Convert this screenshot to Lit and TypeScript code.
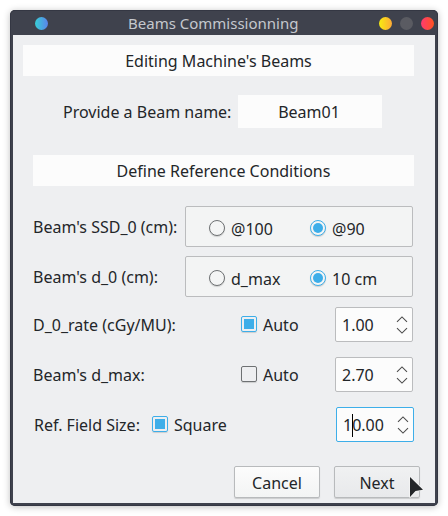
import { LitElement, html, css, svg } from "lit";
import { customElement, property } from "lit/decorators.js";
import { classMap } from "lit/directives/class-map.js";

const box = css`
  :host { display: block; }
  * { box-sizing: border-box; }
`;

@customElement("option-mark")
class OptionMark extends LitElement {
  @property() kind = "radio";
  @property({ type: Boolean }) checked = false;
  @property() label = "";
  static styles = [box, css`
    .option { display: flex; align-items: center; gap: 6px; height: 24px; white-space: nowrap; }
    .mark {
      width: 16px; height: 16px; flex: none; border: 1px solid #6e7173;
      border-radius: 2px; padding: 2px; box-shadow: 0 1px 1px rgba(0, 0, 0, 0.15);
    }
    .radio { border-radius: 50%; background: #f4f5f5; }
    .on { border-color: #3daee9; }
    .fill { width: 10px; height: 10px; background: #3daee9; }
    .radio .fill { border-radius: 50%; }
    .text { line-height: 22px; position: relative; top: 1px; }
  `];
  render() {
    return html`<div class="option">
      <div class=${classMap({ mark: true, radio: this.kind === "radio", on: this.checked })}>
        ${this.checked ? html`<div class="fill"></div>` : ""}
      </div>
      <span class="text">${this.label}</span>
    </div>`;
  }
}

@customElement("spin-box")
class SpinBox extends LitElement {
  @property() value = "";
  @property({ type: Boolean }) focused = false;
  static styles = [box, css`
    .spin {
      display: flex; align-items: center; justify-content: space-between;
      width: 78px; height: 35px; padding: 0 4px 0 6px; background: #fcfcfc;
      border: 1px solid #bbbcbe; border-radius: 2px;
    }
    .focused { border-color: #3daee9; }
    .value { position: relative; line-height: 22px; }
    .caret { position: absolute; left: 9px; top: 0; width: 1px; height: 23px; background: #000; }
    svg { display: block; fill: none; stroke: #4d4d4d; stroke-width: 1.1; }
  `];
  render() {
    return html`<div class=${classMap({ spin: true, focused: this.focused })}>
      <span class="value">${this.value}${this.focused ? html`<span class="caret"></span>` : ""}</span>
      <svg width="12" height="18" viewBox="0 0 12 18">
        ${svg`<path d="M1 5.8 6 .9 11 5.8M1 12.2 6 17.1 11 12.2" />`}
      </svg>
    </div>`;
  }
}

@customElement("app-root")
class AppRoot extends LitElement {
  static styles = [box, css`
    :host {
      height: 516px; padding: 10px; background: #fff; overflow: hidden; box-sizing: border-box;
      font: 16px/22px "Noto Sans", sans-serif; color: #232629;
    }
    .window {
      width: 428px; height: 496px; padding: 0 3px 3px; background: #3f424d;
      border-radius: 5px; box-shadow: inset 0 0 0 1px #343743, 0 1px 7px rgba(0, 0, 0, 0.25);
    }
    .titlebar { height: 25px; display: flex; align-items: center; padding: 2px 1px 0 22px; }
    .dot { width: 13px; height: 13px; border-radius: 50%; flex: none; }
    .pin { background: linear-gradient(90deg, #37cfd6, #5b83ea); }
    .min { background: linear-gradient(90deg, #f7ec10, #fda936); }
    .max { background: #5a5b62; }
    .close { background: linear-gradient(90deg, #ff3b70, #ff5320); }
    .title { flex: 1; padding: 0 0 1px 80px; font-size: 15px; line-height: 20px; color: #c5c8cd; white-space: nowrap; }
    .dots { display: flex; gap: 8px; }
    .content { height: 468px; background: #eeeff1; padding: 10px 0 0 20px; }
    .banner { width: 381px; height: 31px; background: #fcfcfc; text-align: center; line-height: 33px; }
    .wide { width: 391px; margin-left: -10px; }
    .name { display: flex; margin: 19px 0 27px 30px; height: 33px; line-height: 35px; white-space: nowrap; }
    .name-label { width: 175px; }
    .name-field { width: 144px; background: #fcfcfc; text-align: center; padding-right: 2px; }
    .group-row { display: grid; grid-template: 41px / 152px 228px; height: 41px; margin-bottom: 9px; white-space: nowrap; }
    .first { margin-top: 20px; }
    .row-label { line-height: 43px; }
    .group {
      display: grid; grid-template-columns: 101px 1fr; padding: 9px 0 0 23px;
      background: #f3f4f4; border: 1px solid #bbbcbe; border-radius: 2px;
    }
    .group option-mark { height: 24px; }
    .row { display: grid; grid-template: 35px / 208px 94px 78px; height: 35px; margin-bottom: 15px; white-space: nowrap; }
    .values { margin-top: 10px; }
    .row option-mark { padding-top: 5px; }
    .size { grid-template-columns: 119px 184px 78px; }
    .row .row-label { line-height: 37px; }
    .size .row-label { padding-left: 1px; }
    .buttons { display: flex; gap: 14px; margin: 24px 0 0 201px; position: relative; }
    .button {
      width: 86px; height: 32px; text-align: center; line-height: 32px; border: 1px solid #b8babc;
      border-radius: 2px; background: linear-gradient(#fcfcfc, #f3f4f4); box-shadow: 0 1px 1px rgba(0, 0, 0, 0.15);
    }
    .hover { background: linear-gradient(#f0f1f2, #e8e9eb); }
    .cursor { position: absolute; left: 174px; top: 9px; }
  `];
  render() {
    return html`<div class="window">
      <div class="titlebar">
        <div class="dot pin"></div>
        <div class="title">Beams Commissionning</div>
        <div class="dots"><div class="dot min"></div><div class="dot max"></div><div class="dot close"></div></div>
      </div>
      <div class="content">
        <div class="banner wide">Editing Machine's Beams</div>
        <div class="name"><div class="name-label">Provide a Beam name:</div><div class="name-field">Beam01</div></div>
        <div class="banner">Define Reference Conditions</div>
        <div class="group-row first">
          <div class="row-label">Beam's SSD_0 (cm):</div>
          <div class="group"><option-mark label="@100"></option-mark><option-mark label="@90" checked></option-mark></div>
        </div>
        <div class="group-row">
          <div class="row-label">Beam's d_0 (cm):</div>
          <div class="group"><option-mark label="d_max"></option-mark><option-mark label="10 cm" checked></option-mark></div>
        </div>
        <div class="row values">
          <div class="row-label">D_0_rate (cGy/MU):</div>
          <option-mark kind="check" label="Auto" checked></option-mark>
          <spin-box value="1.00"></spin-box>
        </div>
        <div class="row">
          <div class="row-label">Beam's d_max:</div>
          <option-mark kind="check" label="Auto"></option-mark>
          <spin-box value="2.70"></spin-box>
        </div>
        <div class="row size">
          <div class="row-label">Ref. Field Size:</div>
          <option-mark kind="check" label="Square" checked></option-mark>
          <spin-box value="10.00" focused></spin-box>
        </div>
        <div class="buttons">
          <div class="button">Cancel</div>
          <div class="button hover">Next</div>
          <svg class="cursor" width="20" height="26" viewBox="0 0 20 26">
            <path d="M2 2V22L7.5 16 15 14.7Z" fill="#232629" stroke="#f4f4f4" stroke-width="1.6" stroke-linejoin="round" paint-order="stroke" />
          </svg>
        </div>
      </div>
    </div>`;
  }
}
